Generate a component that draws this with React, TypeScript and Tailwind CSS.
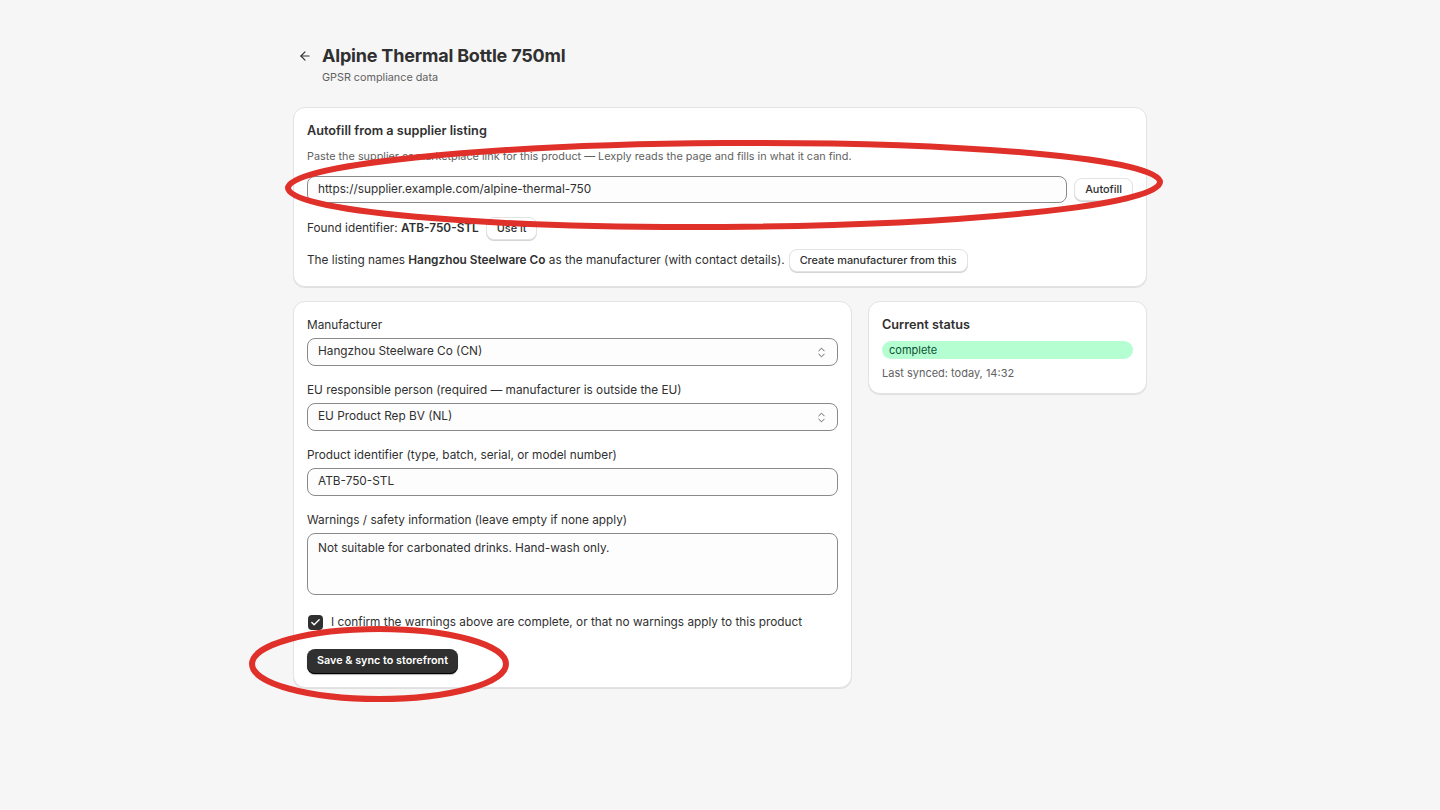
import { ArrowLeft, ChevronsUpDown, Check } from "lucide-react";

const font = { fontFamily: "Inter, 'Noto Sans', sans-serif" };

const Button = ({ children }: { children: React.ReactNode }) => (
  <button className="h-[23px] px-[10px] rounded-lg bg-white border border-[#e3e3e3] shadow-[0_1px_0_#d4d4d4] text-[10.9px] font-medium text-[#303030] leading-none">
    {children}
  </button>
);

const Label = ({ children }: { children: React.ReactNode }) => (
  <div className="text-[11.8px] leading-5 text-[#303030]">{children}</div>
);

const SelectBox = ({ value }: { value: string }) => (
  <div className="mt-[3px] h-[28px] rounded-lg border border-[#8a8a8a] bg-[#fdfdfd] flex items-center justify-between pl-[10px] pr-[9px]">
    <span className="text-[11.8px] text-[#303030]">{value}</span>
    <ChevronsUpDown size={13} strokeWidth={1.6} className="text-[#4a4a4a]" />
  </div>
);

export default function App() {
  return (
    <div style={font} className="relative min-h-screen bg-[#f6f6f6] text-[#303030]">
      <div className="w-[854px] mx-auto pt-[43px]">
        {/* header */}
        <div className="flex items-center gap-[10px] pl-[5px]">
          <ArrowLeft size={14} strokeWidth={2} className="text-[#303030]" />
          <h1 className="text-[18px] font-bold leading-[26px] tracking-[-0.2px]">Alpine Thermal Bottle 750ml</h1>
        </div>
        <div className="pl-[29px] text-[10.8px] text-[#616161] leading-4 mt-[1px]">GPSR compliance data</div>

        {/* autofill card */}
        <div className="mt-[21px] bg-white rounded-xl border border-[#e3e3e3] shadow-[0_1px_0_#e0e0e0] px-[13px] pt-[13px] pb-[14px]">
          <div className="text-[12.7px] font-semibold leading-5">Autofill from a supplier listing</div>
          <div className="mt-[7px] text-[10.85px] leading-4 text-[#616161]">
            Paste the supplier or marketplace link for this product — Lexply reads the page and fills in what it can find.
          </div>
          <div className="mt-[12px] flex items-center gap-[7px]">
            <div className="flex-1 h-[27px] rounded-lg border border-[#8a8a8a] bg-[#fdfdfd] flex items-center pl-[10px] text-[11.8px] text-[#303030]">
              https://supplier.example.com/alpine-thermal-750
            </div>
            <Button>Autofill</Button>
          </div>
          <div className="mt-[14px] flex items-center gap-[7px] text-[11.8px]">
            <span>
              Found identifier: <span className="font-semibold">ATB-750-STL</span>
            </span>
            <Button>Use it</Button>
          </div>
          <div className="mt-[9px] flex items-center gap-[4px] text-[11.8px]">
            <span>
              The listing names <span className="font-semibold">Hangzhou Steelware Co</span> as the manufacturer (with contact details).
            </span>
            <Button>Create manufacturer from this</Button>
          </div>
        </div>

        {/* lower grid */}
        <div className="mt-[14px] grid grid-cols-[559px_279px] gap-4 items-start">
          <div className="bg-white rounded-xl border border-[#e3e3e3] shadow-[0_1px_0_#e0e0e0] px-[13px] pt-[13px] pb-[13px]">
            <Label>Manufacturer</Label>
            <SelectBox value="Hangzhou Steelware Co (CN)" />

            <div className="mt-[14px]">
              <Label>EU responsible person (required — manufacturer is outside the EU)</Label>
            </div>
            <SelectBox value="EU Product Rep BV (NL)" />

            <div className="mt-[14px]">
              <Label>Product identifier (type, batch, serial, or model number)</Label>
            </div>
            <div className="mt-[3px] h-[28px] rounded-lg border border-[#8a8a8a] bg-[#fdfdfd] flex items-center pl-[10px] text-[11.8px]">
              ATB-750-STL
            </div>

            <div className="mt-[14px]">
              <Label>Warnings / safety information (leave empty if none apply)</Label>
            </div>
            <div className="mt-[3px] h-[62px] rounded-lg border border-[#8a8a8a] bg-[#fdfdfd] pl-[10px] pt-[4px] text-[11.8px] leading-5">
              Not suitable for carbonated drinks. Hand-wash only.
            </div>

            <div className="mt-[17px] flex items-center gap-[8px]">
              <div className="w-[15px] h-[15px] rounded-[4px] bg-[#303030] flex items-center justify-center ml-[1px]">
                <Check size={11} strokeWidth={3} className="text-white" />
              </div>
              <span className="text-[11.8px] leading-5">I confirm the warnings above are complete, or that no warnings apply to this product</span>
            </div>

            <button className="mt-[17px] h-[25px] px-[10px] rounded-lg bg-[#303030] text-white text-[10.8px] font-semibold shadow-[inset_0_-1px_0_#000,0_1px_1px_rgba(0,0,0,0.3)]">
              Save &amp; sync to storefront
            </button>
          </div>

          <div className="bg-white rounded-xl border border-[#e3e3e3] shadow-[0_1px_0_#e0e0e0] px-[13px] pt-[13px] pb-[12px]">
            <div className="text-[12.7px] font-semibold leading-5">Current status</div>
            <div className="mt-[6px] h-[18px] rounded-full bg-[#b4fed2] text-[#0c5132] text-[11px] leading-[18px] pl-[7px]">complete</div>
            <div className="mt-[6px] text-[11px] leading-4 text-[#616161]">Last synced: today, 14:32</div>
          </div>
        </div>
      </div>

      {/* annotation rings */}
      <svg className="absolute inset-0 pointer-events-none" width="1440" height="810" viewBox="0 0 1440 810">
        <ellipse cx="724" cy="185" rx="436" ry="42" fill="none" stroke="#e0302a" strokeWidth="6" transform="rotate(-0.4 724 185)" />
        <ellipse cx="379" cy="664" rx="127" ry="35" fill="none" stroke="#e0302a" strokeWidth="6" />
      </svg>
    </div>
  );
}
